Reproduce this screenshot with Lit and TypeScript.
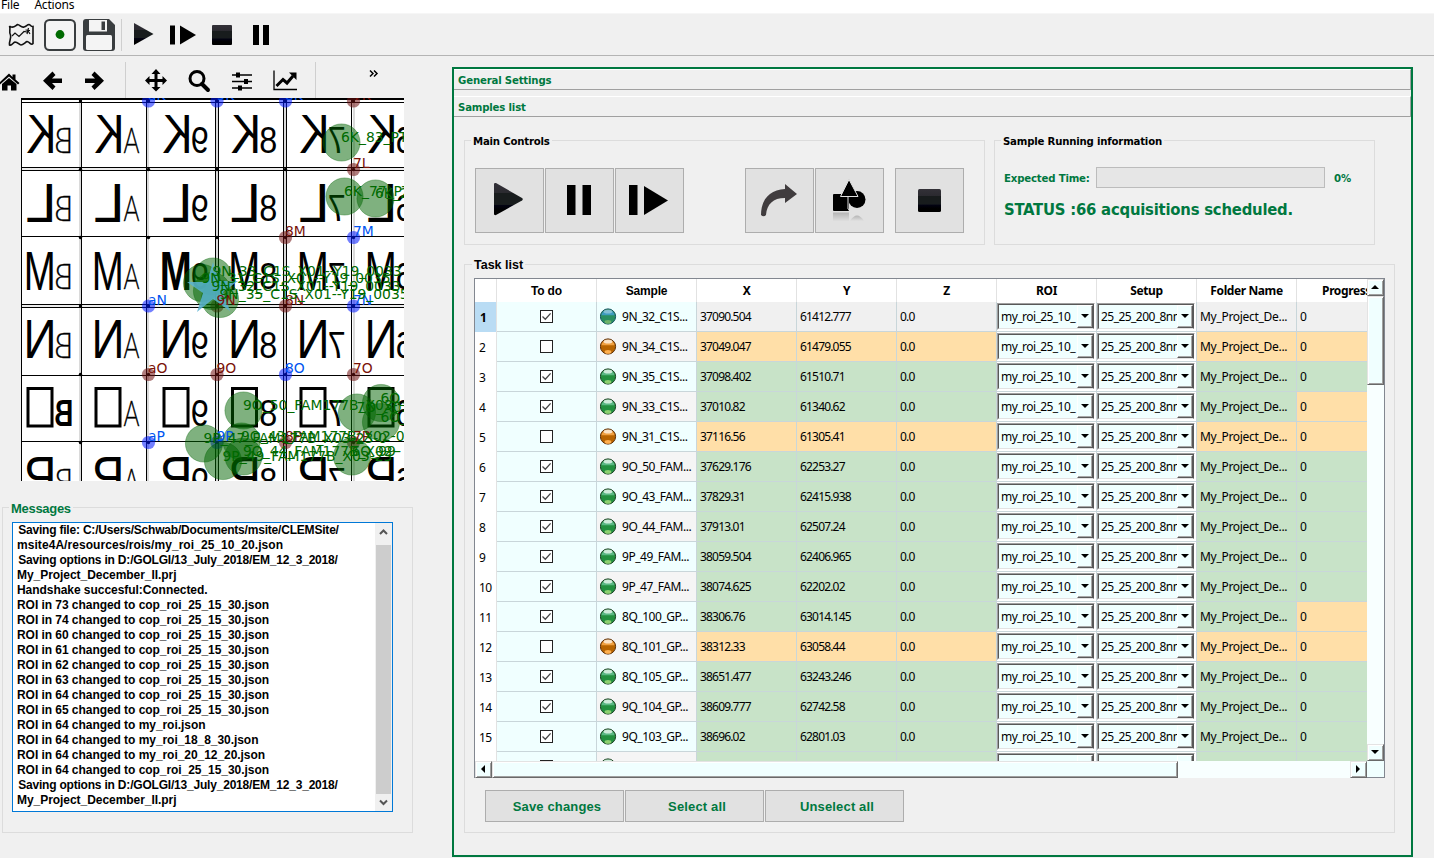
import { LitElement, html, css, svg } from "lit";
import { customElement, property } from "lit/decorators.js";

const MESSAGES = [
  "\u00a0Saving file: C:/Users/Schwab/Documents/msite/CLEMSite/",
  "msite4A/resources/rois/my_roi_25_10_20.json",
  "\u00a0Saving options in D:/GOLGI/13_July_2018/EM_12_3_2018/",
  "My_Project_December_II.prj",
  "Handshake succesful:Connected.",
  "ROI in 73 changed to cop_roi_25_15_30.json",
  "ROI in 74 changed to cop_roi_25_15_30.json",
  "ROI in 60 changed to cop_roi_25_15_30.json",
  "ROI in 61 changed to cop_roi_25_15_30.json",
  "ROI in 62 changed to cop_roi_25_15_30.json",
  "ROI in 63 changed to cop_roi_25_15_30.json",
  "ROI in 64 changed to cop_roi_25_15_30.json",
  "ROI in 65 changed to cop_roi_25_15_30.json",
  "ROI in 64 changed to my_roi.json",
  "ROI in 64 changed to my_roi_18_8_30.json",
  "ROI in 64 changed to my_roi_20_12_20.json",
  "ROI in 64 changed to cop_roi_25_15_30.json",
  "\u00a0Saving options in D:/GOLGI/13_July_2018/EM_12_3_2018/",
  "My_Project_December_II.prj",
];

type Row = [string, string, string, string, string];
// sample, x, y, row tone, progress tone
const ROWS: Row[] = [
  ["9N_32_C1S...", "37090.504", "61412.777", "plain", "plain"],
  ["9N_34_C1S...", "37049.047", "61479.055", "orange", "orange"],
  ["9N_35_C1S...", "37098.402", "61510.71", "green", "green"],
  ["9N_33_C1S...", "37010.82", "61340.62", "green", "orange"],
  ["9N_31_C1S...", "37116.56", "61305.41", "orange", "orange"],
  ["9O_50_FAM...", "37629.176", "62253.27", "green", "green"],
  ["9O_43_FAM...", "37829.31", "62415.938", "green", "green"],
  ["9O_44_FAM...", "37913.01", "62507.24", "green", "green"],
  ["9P_49_FAM...", "38059.504", "62406.965", "green", "green"],
  ["9P_47_FAM...", "38074.625", "62202.02", "green", "green"],
  ["8Q_100_GP...", "38306.76", "63014.145", "green", "orange"],
  ["8Q_101_GP...", "38312.33", "63058.44", "orange", "orange"],
  ["8Q_105_GP...", "38651.477", "63243.246", "green", "green"],
  ["9Q_104_GP...", "38609.777", "62742.58", "green", "green"],
  ["9Q_103_GP...", "38696.02", "62801.03", "green", "green"],
  ["", "", "", "green", "green"],
];

const playGrad = (id: string) => svg`<defs><linearGradient id=${id} x1="0" y1="0" x2="0" y2="1">
  <stop offset="0" stop-color="#333138"/><stop offset=".3" stop-color="#2b2a30"/>
  <stop offset=".31" stop-color="#181c1d"/><stop offset=".67" stop-color="#181c1d"/>
  <stop offset=".68" stop-color="#020214"/><stop offset=".85" stop-color="#000"/></linearGradient></defs>`;

// advance width and left offset of each etched letter, relative to its grid column
const BIG: Record<string, [number, number]> = { K: [30, 13.9], L: [31, 13], M: [32, 11.3], N: [33, 11], P: [32, 12] };
const SMALL: Record<string, [number, number]> = { B: [19, 41.7], A: [16, 43] };

@customElement("grid-map")
class GridMap extends LitElement {
  static styles = css`
    :host { display: block; width: 383px; height: 383px; }
    svg { display: block; }
    .etch { font-family: "Liberation Sans", sans-serif; fill: #000; }
    .thin { font-family: "Lato", sans-serif; font-weight: 300; fill: #000; stroke: #000; stroke-width: 0.3; }
    .tag { font-family: "DejaVu Sans", sans-serif; font-size: 13.9px; }
  `;
  render() {
    const cols = [12.5, 80.5, 148.5, 217, 285.5, 353.5];
    const rows = [101, 169.5, 237.5, 306, 374.5, 442.5];
    const small = ["B", "A", "9", "8", "7", "6"];
    const big = ["K", "L", "M", "N", "O", "P"];
    const etch = (t: string, x: number, base: number, w: number, size: number, bold = false, cls = "etch") => svg`
      <text class=${cls} transform="translate(${x + w} ${base}) scale(-1 1)" x="0" y="0" font-size=${size}
        font-weight=${bold ? 700 : 400} textLength=${w} lengthAdjust="spacingAndGlyphs">${t}</text>`;
    const R = "#7a1208", B = "#0054f0";
    const pins: [number, number, string, string][] = [
      [2, 0, "aK", B], [3, 0, "9K", B], [4, 0, "8K", B], [5, 0, "7K", R], [5, 1, "7L", R],
      [4, 2, "8M", R], [5, 2, "7M", B], [2, 3, "aN", B], [3, 3, "9N", R], [4, 3, "8N", R], [5, 3, "7N", B],
      [2, 4, "aO", R], [3, 4, "9O", R], [4, 4, "8O", B], [5, 4, "7O", R],
      [2, 5, "aP", B], [3, 5, "9P", B], [4, 5, "8P", R], [5, 5, "7P", R],
    ];
    const spots: [number, number, string][] = [
      [341.5, 142.5, "6K_83_PT"], [344.5, 196.5, "6K_77_PT"], [375.5, 198.5, "6K_2"],
      [213, 276.5, "9N_33_C1S_X01--Y19_0033"], [202, 283, "9N_31_C1S_X01--Y19_0035"],
      [212, 291, "9N_32_C1S_X01--Y19_0033"], [220, 299, "9N_35_C1S_X01--Y19_0035"],
      [243.5, 410.5, "9O_50_FAM177B_X03-"], [204, 443.5, "9P_47_FAM177B_X03-23-0"],
      [241.5, 441.5, "9O_43_FAM177B_X02-02"], [243.5, 456.5, "9O_44_FAM177B_X02-"],
      [223, 461, "9P_49_FAM177B_X03-23"], [357, 412.5, "7O_X03"], [381, 403, "6O_"],
      [381, 422, "6O_"], [352, 456.5, "6Q_99-"],
    ];
    return html`<svg width="383" height="383" viewBox="21 98 383 383">
      <rect x="21" y="98" width="383" height="383" fill="#fff"/>
      ${[79, 147, 216, 284, 353].map((x) => svg`<rect x=${x} y="98" width="2" height="383" fill="#dadada"/>`)}
      ${[168, 305].map((y) => svg`<rect x="21" y=${y} width="383" height="2" fill="#ececec"/>`)}
      ${[81, 146, 215, 218, 283, 286, 351].map((x) => svg`<rect x=${x} y="98" width="1" height="383"/>`)}
      <rect x="21" y="98" width="1" height="383"/>
      <rect x="21" y="98" width="383" height="2"/><rect x="21" y="102" width="383" height="1"/>
      ${[167, 170, 236, 304, 307, 375, 441].map((y) => svg`<rect x="21" y=${y} width="383" height="1"/>`)}
      ${rows.map((r, i) => cols.map((c, j) => {
        const [sw, sx] = SMALL[small[j]] ?? [18, 42.3];
        const [bw, bx] = BIG[big[i]] ?? [0, 0];
        return svg`${big[i] === "O"
          ? svg`<rect x=${c + 15.5} y=${r + 14} width="24" height="37.500" fill="none" stroke="#000" stroke-width="3"/>`
          : etch(big[i], c + bx, r + 52, bw, 56, j === 2 && i === 2)}
        ${etch(small[j], c + sx, r + 51.5, sw, j < 2 && !(j === 0 && i === 4) ? 35.5 : 36.5, j === 0 && i === 4, j < 2 && !(j === 0 && i === 4) ? "thin" : "etch")}`;
      }))}
      ${rows.map((r) => cols.slice(1).map((c) => svg`<circle cx=${c} cy=${r} r="1.7"/>`))}
      ${pins.map(([c, r, , k]) => svg`<circle cx=${cols[c]} cy=${rows[r]} r="6.6" fill=${k === B ? "#0018ff" : "#701010"} fill-opacity=".55"/>`)}
      ${spots.map(([x, y]) => svg`<circle cx=${x} cy=${y} r="18.6" fill="#006400" fill-opacity=".5" stroke="#006400" stroke-opacity=".35"/>`)}
      <path d="M213 262 L219 281 H238 L223 292 L230 311 L213 299 L197 312 L203 293 L187 282 H207Z" fill="#5ab4d2" fill-opacity=".85"/>
      ${pins.map(([c, r, t, k]) => svg`<text class="tag" x=${cols[c] - 0.5} y=${rows[r] - 1.5} fill=${k}>${t}</text>`)}
      ${spots.map(([x, y, t]) => svg`<text class="tag" x=${x - 0.5} y=${y - 0.5} fill="#006a00">${t}</text>`)}
    </svg>`;
  }
}

@customElement("task-table")
class TaskTable extends LitElement {
  static styles = css`
    :host { display: grid; grid-template: 482px 17px / 892px 17px; border: 1px solid #828790; box-sizing: border-box;
      width: 911px; height: 500px; background: #f0ffff; font: 12px "Noto Sans", sans-serif; color: #000; }
    .view { overflow: hidden; background: #fff; }
    .row { display: grid; grid-template-columns: 22px repeat(9, 100px); height: 30px; }
    .head { height: 23px; font-weight: 700; letter-spacing: -0.4px; }
    .head > div { display: flex; align-items: center; justify-content: center; border-right: 1px solid #e2e2e2; padding-bottom: 1px; }
    .head .arial { font-family: "Liberation Sans", sans-serif; letter-spacing: -0.2px; padding-top: 1px; padding-bottom: 0; }
    .row > div { box-sizing: border-box; white-space: nowrap; overflow: hidden; }
    .cell { border-right: 1px solid #c9d6da; border-bottom: 1px solid #c9d6da; display: flex; align-items: center; padding-left: 3px; letter-spacing: -0.82px; }
    .num { border-right: 1px solid #e2e2e2; display: flex; align-items: center; padding: 1px 0 0 4px; letter-spacing: -0.7px; }
    .num.on { background: #b9dcf4; font-weight: 700; padding-left: 5px; }
    .todo { justify-content: center; padding: 0; }
    .azure { background: #f0ffff; } .alt { background: #f5f5f5; }
    .plain { background: #f0f0f0; } .orange { background: #ffdfa8; } .green { background: #c8e3c8; }
    .box { width: 13px; height: 13px; box-sizing: border-box; border: 1px solid #222; background: #fff; }
    .box svg { display: block; }
    .ball { flex: none; }
    .name { padding: 0 0 1px 3px; gap: 5px; letter-spacing: -0.47px; }
    .folder { letter-spacing: -0.3px; }
    .combo { padding: 1px 0 1px 0; background: #fff; border-right: 1px solid #c9d6da; border-bottom: 1px solid #c9d6da; }
    .sunk { width: 98px; height: 27px; box-sizing: border-box; display: flex; background: #f0ffff; border: 1px solid; border-color: #a0a0a0 #fff #fff #a0a0a0; }
    .inner { flex: 1; display: flex; min-width: 0; border: 1px solid; border-color: #585858 #585858 #e3e3e3 #585858; }
    .label { flex: 1; min-width: 0; overflow: hidden; padding-left: 2px; line-height: 24px; letter-spacing: -0.55px; }
    .drop { width: 16px; flex: none; box-sizing: border-box; display: flex; align-items: center; justify-content: center; padding-bottom: 1px; border: 1px solid; border-color: #fff #585858 #585858 #fff; box-shadow: inset -1px -1px #a8a8a8; }
    .tri-d { border: 4px solid transparent; border-top-color: #000; border-bottom: 0; }
    .tri-u { border: 4px solid transparent; border-bottom-color: #000; border-top: 0; }
    .tri-l { border: 4px solid transparent; border-right-color: #000; border-left: 0; }
    .tri-r { border: 4px solid transparent; border-left-color: #000; border-right: 0; }
    .bar { display: flex; background: #f8ffff; }
    .bar.v { flex-direction: column; }
    .b { width: 17px; height: 17px; flex: none; box-sizing: border-box; display: flex; align-items: center; justify-content: center; padding: 0 1px 2px 0;
      background: #f0ffff; border: 1px solid; border-color: #e3e3e3 #696969 #696969 #e3e3e3; box-shadow: inset 1px 1px #fff, inset -1px -1px #a0a0a0; }
    .b.tv { height: 89px; } .b.th { width: 686px; } .grow { flex: 1; }
  `;
  render() {
    const combo = (t: string) => html`<div class="combo"><div class="sunk"><div class="inner">
      <div class="label">${t}</div><div class="drop"><i class="tri-d"></i></div></div></div></div>`;
    return html`<div class="view">
        <div class="row head"><div></div><div class="arial">To do</div><div class="arial">Sample</div>
          ${["X", "Y", "Z", "ROI", "Setup", "Folder Name", "Progress"].map((h) => html`<div>${h}</div>`)}</div>
        ${ROWS.map(([s, x, y, tone, prog], i) => html`<div class="row">
          <div class="num ${i === 0 ? "on" : ""}">${s ? i + 1 : ""}</div>
          <div class="cell todo azure"><div class="box">${tone === "orange" ? "" : svg`<svg width="11" height="11"><path d="M1.5 5.5 L4.3 8.2 L9.6 2.4" fill="none" stroke="#444" stroke-width="1.3"/></svg>`}</div></div>
          <div class="cell name ${i % 2 ? "alt" : "azure"}">${this.ball(i === 0 ? "teal" : tone)}<span>${s}</span></div>
          <div class="cell ${tone}">${x}</div><div class="cell ${tone}">${y}</div><div class="cell ${tone}">${s ? "0.0" : ""}</div>
          ${combo(s ? "my_roi_25_10_" : "")}${combo(s ? "25_25_200_8nm" : "")}
          <div class="cell folder ${tone}">${s ? "My_Project_De..." : ""}</div><div class="cell ${prog}">${s ? "0" : ""}</div>
        </div>`)}
      </div>
      <div class="bar v"><div class="b"><i class="tri-u"></i></div><div class="b tv"></div><div class="grow"></div><div class="b"><i class="tri-d"></i></div></div>
      <div class="bar"><div class="b"><i class="tri-l"></i></div><div class="b th"></div><div class="grow"></div><div class="b"><i class="tri-r"></i></div></div>`;
  }
  ball(t: string) {
    const [top, mid, low, rim] = t === "orange" ? ["#f0a040", "#b86400", "#ffb050", "#5a2a00"]
      : t === "teal" ? ["#3f9cc0", "#2a8f62", "#6fb36a", "#0c4f5c"] : ["#5bb884", "#239040", "#8ed070", "#143c1c"];
    return svg`<svg class="ball" width="17" height="17" viewBox="0 0 17 17">
      <circle cx="8" cy="8.500" r="7.6" fill=${mid} stroke=${rim} stroke-width="1"/>
      <path d="M1.300 7.2 A6.9 6.9 0 0 1 14.700 7.2Z" fill=${top}/>
      <ellipse cx="8" cy="3.6" rx="4.4" ry="2" fill="#fff" fill-opacity=${t === "teal" ? ".35" : ".7"}/>
      <ellipse cx="8" cy="13.9" rx="3.4" ry="1.8" fill=${low}/></svg>`;
  }
}

@customElement("group-box")
class GroupBox extends LitElement {
  @property() label = "";
  static styles = css`
    :host { display: flex; flex-direction: column; box-sizing: border-box; border: 1px solid #dcdcdc; }
    .cap { height: 0; display: flex; align-items: center; padding-left: 6px; }
    .cap span { background: #f0f0f0; padding: 0 2px; white-space: nowrap; }
  `;
  render() {
    return html`<div class="cap"><span part="cap">${this.label}</span></div><slot></slot>`;
  }
}

@customElement("app-root")
class AppRoot extends LitElement {
  static styles = css`
    :host { display: flex; flex-direction: column; width: 1434px; height: 858px; overflow: hidden; background: #f0f0f0; color: #000; font: 12px "Noto Sans", sans-serif; }
    .menu { height: 14px; background: #fff; box-sizing: border-box; border-bottom: 1px solid #f6f6f6; display: flex; gap: 15px; line-height: 9px; letter-spacing: -0.2px; padding-left: 1px; overflow: hidden; }
    .tools { height: 42px; box-sizing: border-box; border-bottom: 1px solid #b4b4b4; }
    svg { display: block; }
    .main { display: flex; flex: 1; min-height: 0; }
    .left { width: 452px; flex: none; display: flex; flex-direction: column; }
    .nav { height: 42px; }
    grid-map { margin-left: 21px; }
    .msgs { width: 411px; height: 326px; margin: 26px 0 0 2px; padding: 0 19px 0 9px; }
    .msgs::part(cap) { font: 700 13px "Liberation Sans", sans-serif; color: #007840; letter-spacing: -0.3px; margin-left: -9px; }
    .log { margin-top: 14px; width: 381px; height: 290px; box-sizing: border-box; border: 1px solid #0078d7; background: #fff; display: flex; }
    .lines { flex: 1; padding-left: 4px; font: 700 12px/15px "Liberation Sans", sans-serif; white-space: pre; letter-spacing: -0.05px; }
    .lines .path { letter-spacing: -0.2px; text-indent: -2px; }
    .lines .wide { letter-spacing: 0.06px; }
    .scroll { width: 17px; background: #f0f0f0; display: flex; flex-direction: column; }
    .thumb { height: 249px; width: 15px; margin-left: 1px; background: #cdcdcd; }
    .scroll svg { margin: -2px 0 2px 1px; }
    .panel { width: 961px; height: 790px; margin-top: 11px; box-sizing: border-box; border: 2px solid #007840; display: flex; flex-direction: column; }
    .fold { height: 21px; box-sizing: border-box; border-top: 1px solid #fff; border-right: 1px solid #a0a0a0; border-bottom: 1px solid #a0a0a0; padding-left: 4px; line-height: 20px; }
    .fold + .fold { margin-top: 6px; }
    .tah { font: 700 11.3px "DejaVu Sans Condensed", "DejaVu Sans", sans-serif; font-stretch: condensed; letter-spacing: -0.18px; }
    .grn { color: #007840; }
    .fold.tah { line-height: 21px; }
    .top { display: flex; gap: 9px; margin: 23px 0 0 10px; }
    .ctl { width: 521px; height: 105px; }
    .ctl::part(cap), .run::part(cap) { font: 700 11.3px "DejaVu Sans Condensed", "DejaVu Sans", sans-serif; font-stretch: condensed; letter-spacing: -0.2px; }
    .btns { display: flex; gap: 1px; padding: 27px 0 0 10px; }
    .btn { width: 69px; height: 65px; box-sizing: border-box; border: 1px solid #adadad; background: #e1e1e1; }
    .g1 { margin-left: 60px; } .g2 { margin-left: 10px; }
    .run { width: 381px; height: 105px; }
    .time { display: flex; align-items: center; padding: 26px 0 0 9px; }
    .time span { padding-top: 1px; }
    .time .lab { width: 92px; }
    .prog { width: 229px; height: 21px; box-sizing: border-box; border: 1px solid #bcbcbc; background: #e6e6e6; margin-right: 9px; }
    .status { font-size: 16.5px; padding: 12px 0 0 9px; line-height: 20px; letter-spacing: -0.22px; white-space: nowrap; }
    .tasks { width: 931px; height: 569px; margin: 19px 0 0 10px; }
    .tasks::part(cap) { font: 700 12.5px "Liberation Sans", sans-serif; margin-left: 1px; }
    task-table { margin: 13px 0 0 9px; }
    .acts { display: flex; gap: 1px; padding: 12px 0 0 20px; }
    .act { width: 139px; height: 32px; box-sizing: border-box; border: 1px solid #adadad; background: #e1e1e1; text-align: center;
      font: 700 13px/31px "Liberation Sans", sans-serif; color: #007840; letter-spacing: 0.15px; padding-left: 5px; }
  `;
  render() {
    const tone = (m: string) => (m.startsWith("\u00a0") ? "path" : m.startsWith("msite") ? "wide" : "");
    return html`
      <div class="menu"><span>File</span><span>Actions</span></div>
      <div class="tools">${this.tools()}</div>
      <div class="main">
        <div class="left">
          <div class="nav">${this.nav()}</div>
          <grid-map></grid-map>
          <group-box class="msgs" label="Messages">
            <div class="log"><div class="lines">${MESSAGES.map((m) => html`<div class=${tone(m)}>${m}</div>`)}</div>
              <div class="scroll">
                <svg width="15" height="22"><path d="M4 13 L7.5 9.500 L11 13" fill="none" stroke="#555" stroke-width="2"/></svg>
                <div class="thumb"></div>
                <svg width="15" height="17"><path d="M4 8.500 L7.5 12 L11 8.500" fill="none" stroke="#555" stroke-width="2"/></svg>
              </div></div>
          </group-box>
        </div>
        <div class="panel">
          <div class="fold tah grn">General Settings</div>
          <div class="fold tah grn">Samples list</div>
          <div class="top">
            <group-box class="ctl" label="Main Controls"><div class="btns">${this.buttons()}</div></group-box>
            <group-box class="run" label="Sample Running information">
              <div class="time tah grn"><span class="lab">Expected Time:</span><div class="prog"></div><span>0%</span></div>
              <div class="status tah grn st">STATUS :66 acquisitions scheduled.</div>
            </group-box>
          </div>
          <group-box class="tasks" label="Task list">
            <task-table></task-table>
            <div class="acts"><div class="act">Save changes</div><div class="act">Select all</div><div class="act">Unselect all</div></div>
          </group-box>
        </div>
      </div>`;
  }
  tools() {
    return svg`<svg width="300" height="41" viewBox="0 14 300 41">${playGrad("tg")}
      <path d="M9.500 26 C13 29 15 26 17.500 24.500 C20 24.500 21 28 24 27 C26.500 26.500 27 24.500 29 24.500 C31 25 31 27 33 26.500 V43.500 C31 46 29 41 27 41.500 C25 42.500 23 45 21 45 C19 45 18 42 15 42 C13 42.500 12 46 9.500 45 C9 41 11.500 38 10.500 35 C8.500 32 11 30 9.500 26Z" fill="none" stroke="#111" stroke-width="1.600"/>
      <path d="M12 36 L15 33 L19 36.500 L24 31.500 L27 32 M25.500 30 L30 30.500 M28.500 28 L27 34 M27.500 30 L30 34" fill="none" stroke="#111" stroke-width="1.200"/>
      <rect x="45" y="20" width="30" height="30" rx="4.500" fill="#f4f4f4" stroke="#393d3f" stroke-width="2"/><circle cx="60" cy="34.500" r="4.400" fill="#006a00"/>
      <path d="M86 19 H109 L115 25 V48 Q115 51 112 51 H86 Q83 51 83 48 V22 Q83 19 86 19Z" fill="#393d3f"/>
      <rect x="89" y="20" width="18" height="11.500" fill="#f4f4f4"/><rect x="101.500" y="21.500" width="3.500" height="8.500" fill="#393d3f"/>
      <rect x="86" y="35" width="26" height="15" rx="1.500" fill="#f4f4f4"/>
      <rect x="121" y="19" width="1" height="32" fill="#cfcfcf"/>
      <path d="M134 23 L153.500 34 L134 45Z" fill="url(#tg)"/>
      <rect x="170" y="25.500" width="5" height="19"/><path d="M180 25.500 L196 35 L180 44.500Z"/>
      <rect x="212" y="25" width="20" height="20" rx="1" fill="url(#tg)"/>
      <rect x="253" y="25" width="6" height="20"/><rect x="263" y="25" width="6" height="20"/></svg>`;
  }
  nav() {
    return svg`<svg width="440" height="42" viewBox="0 56 440 42">
      <path d="M-1 83 L9 73.500 L12.500 77 V74.500 H15.500 V79.500 L19.500 83 L18 84.500 L9 76.500 L0 84.500Z"/><path d="M2 84 L9 78 L16.500 84 V90.500 H11 V85.500 H7.500 V90.500 H2Z"/>
      <path d="M62 78.500 V83 H52 L55.500 86.500 L52.500 90 L43 80.700 L52.500 71.500 L55.500 75 L52 78.500Z"/>
      <path d="M85 78.500 V83 H95 L91.500 86.500 L94.500 90 L104 80.700 L94.500 71.500 L91.500 75 L95 78.500Z"/>
      <rect x="125" y="62" width="1" height="36" fill="#cfcfcf"/><rect x="315" y="62" width="1" height="36" fill="#cfcfcf"/>
      <path d="M156 69 L160.500 74 H157.500 V79 H162.500 V76 L167 80.500 L162.500 85 V82 H157.500 V87 H160.500 L156 91.500 L151.500 87 H154.500 V82 H149.500 V85 L145 80.500 L149.500 76 V79 H154.500 V74 H151.500Z"/>
      <circle cx="197" cy="78.500" r="7" fill="none" stroke="#000" stroke-width="3"/><path d="M202 84 L208 90" stroke="#000" stroke-width="4" stroke-linecap="round"/>
      <path d="M232 75 H252 M232 81.500 H252 M232 88 H252" stroke="#000" stroke-width="1.600"/>
      <rect x="236" y="72.500" width="4" height="5"/><rect x="244" y="79" width="4" height="5"/><rect x="238" y="85.500" width="4" height="5"/>
      <path d="M274 70.500 V89.500 H297" fill="none" stroke="#000" stroke-width="1.300"/>
      <path d="M276.500 86 L283 79.500 L287 83 L293 76" fill="none" stroke="#000" stroke-width="3"/><path d="M289 72.500 H296.500 V80Z"/>
      <path d="M370 70.500 L373 73.500 L370 76.500 M374 70.500 L377 73.500 L374 76.500" fill="none" stroke="#000" stroke-width="1.500"/></svg>`;
  }
  buttons() {
    const s = (c: unknown, cls = "") => html`<div class="btn ${cls}"><svg width="67" height="63">${c}</svg></div>`;
    return [
      s(svg`${playGrad("bg")}<path d="M18 15 Q18 13.500 20 14 L46 29 Q47.500 30.200 46 31.500 L20 46 Q18 46.500 18 45Z" fill="url(#bg)"/>`),
      s(svg`<rect x="21" y="16" width="8.500" height="30"/><rect x="36.500" y="16" width="8.500" height="30"/>`),
      s(svg`<rect x="13" y="16" width="8.500" height="30"/><path d="M28 17 L52 31.500 L28 46Z"/>`),
      s(svg`<path d="M39 15 L51 25 L39 34 V29 C27 29 21 35 20 46 Q17.500 48.500 15 46 C15 30 24 21 39 20Z" fill="#403c3e"/>`, "g1"),
      s(svg`<defs><linearGradient id="rf" x1="0" y1="0" x2="0" y2="1"><stop offset="0" stop-color="#b4b4b4"/><stop offset="1" stop-color="#e1e1e1"/></linearGradient></defs>
        <rect x="17" y="25" width="16" height="17" rx="1"/><circle cx="41" cy="30.500" r="8.500"/>
        <path d="M33 10.500 L42 27.500 H24.500Z" stroke="#e1e1e1" stroke-width="1"/><path d="M32 28 V40 Q35 42 35 42" fill="none" stroke="#e1e1e1"/>
        <rect x="17" y="43.500" width="16" height="9" fill="url(#rf)"/><path d="M34 52 Q41 41 48 52Z" fill="url(#rf)"/>`),
      s(svg`${playGrad("sg")}<rect x="22" y="20" width="23" height="23" rx="1.500" fill="url(#sg)"/>`, "g2"),
    ];
  }
}
